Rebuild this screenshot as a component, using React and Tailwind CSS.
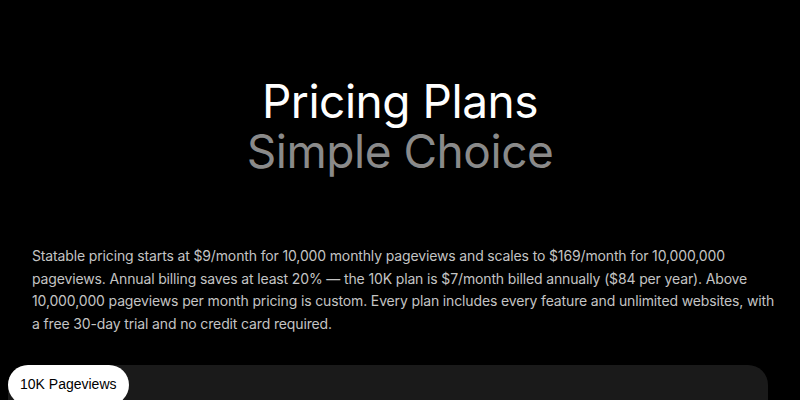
export default function App() {
  return (
    <div className="min-h-screen w-full bg-black text-white overflow-hidden" style={{ fontFamily: 'Inter, "Noto Sans", sans-serif' }}>
      <div className="pt-[76px] text-center">
        <h1 className="text-[46px] leading-[50px] font-normal tracking-[-0.01em]">
          <span className="block text-white">Pricing Plans</span>
          <span className="block text-[#8a8a8a]">Simple Choice</span>
        </h1>
      </div>
      <p className="mt-[69px] pl-8 pr-5 text-[14px] leading-[22.7px] tracking-[-0.01em] text-[#c4c4c4]">
        Statable pricing starts at $9/month for 10,000 monthly pageviews and scales to $169/month for 10,000,000 pageviews. Annual billing saves at least 20% — the 10K plan is $7/month billed annually ($84 per year). Above 10,000,000 pageviews per month pricing is custom. Every plan includes every feature and unlimited websites, with a free 30-day trial and no credit card required.
      </p>
      <div className="mt-[29px] ml-2 mr-8 h-[60px] rounded-t-[20px] bg-[#1a1a1a]">
        <div className="inline-flex h-[40px] items-center rounded-full bg-white px-3 text-[14px] text-black" style={{ fontFamily: '"Liberation Sans", Arial, sans-serif' }}>
          10K Pageviews
        </div>
      </div>
    </div>
  );
}
